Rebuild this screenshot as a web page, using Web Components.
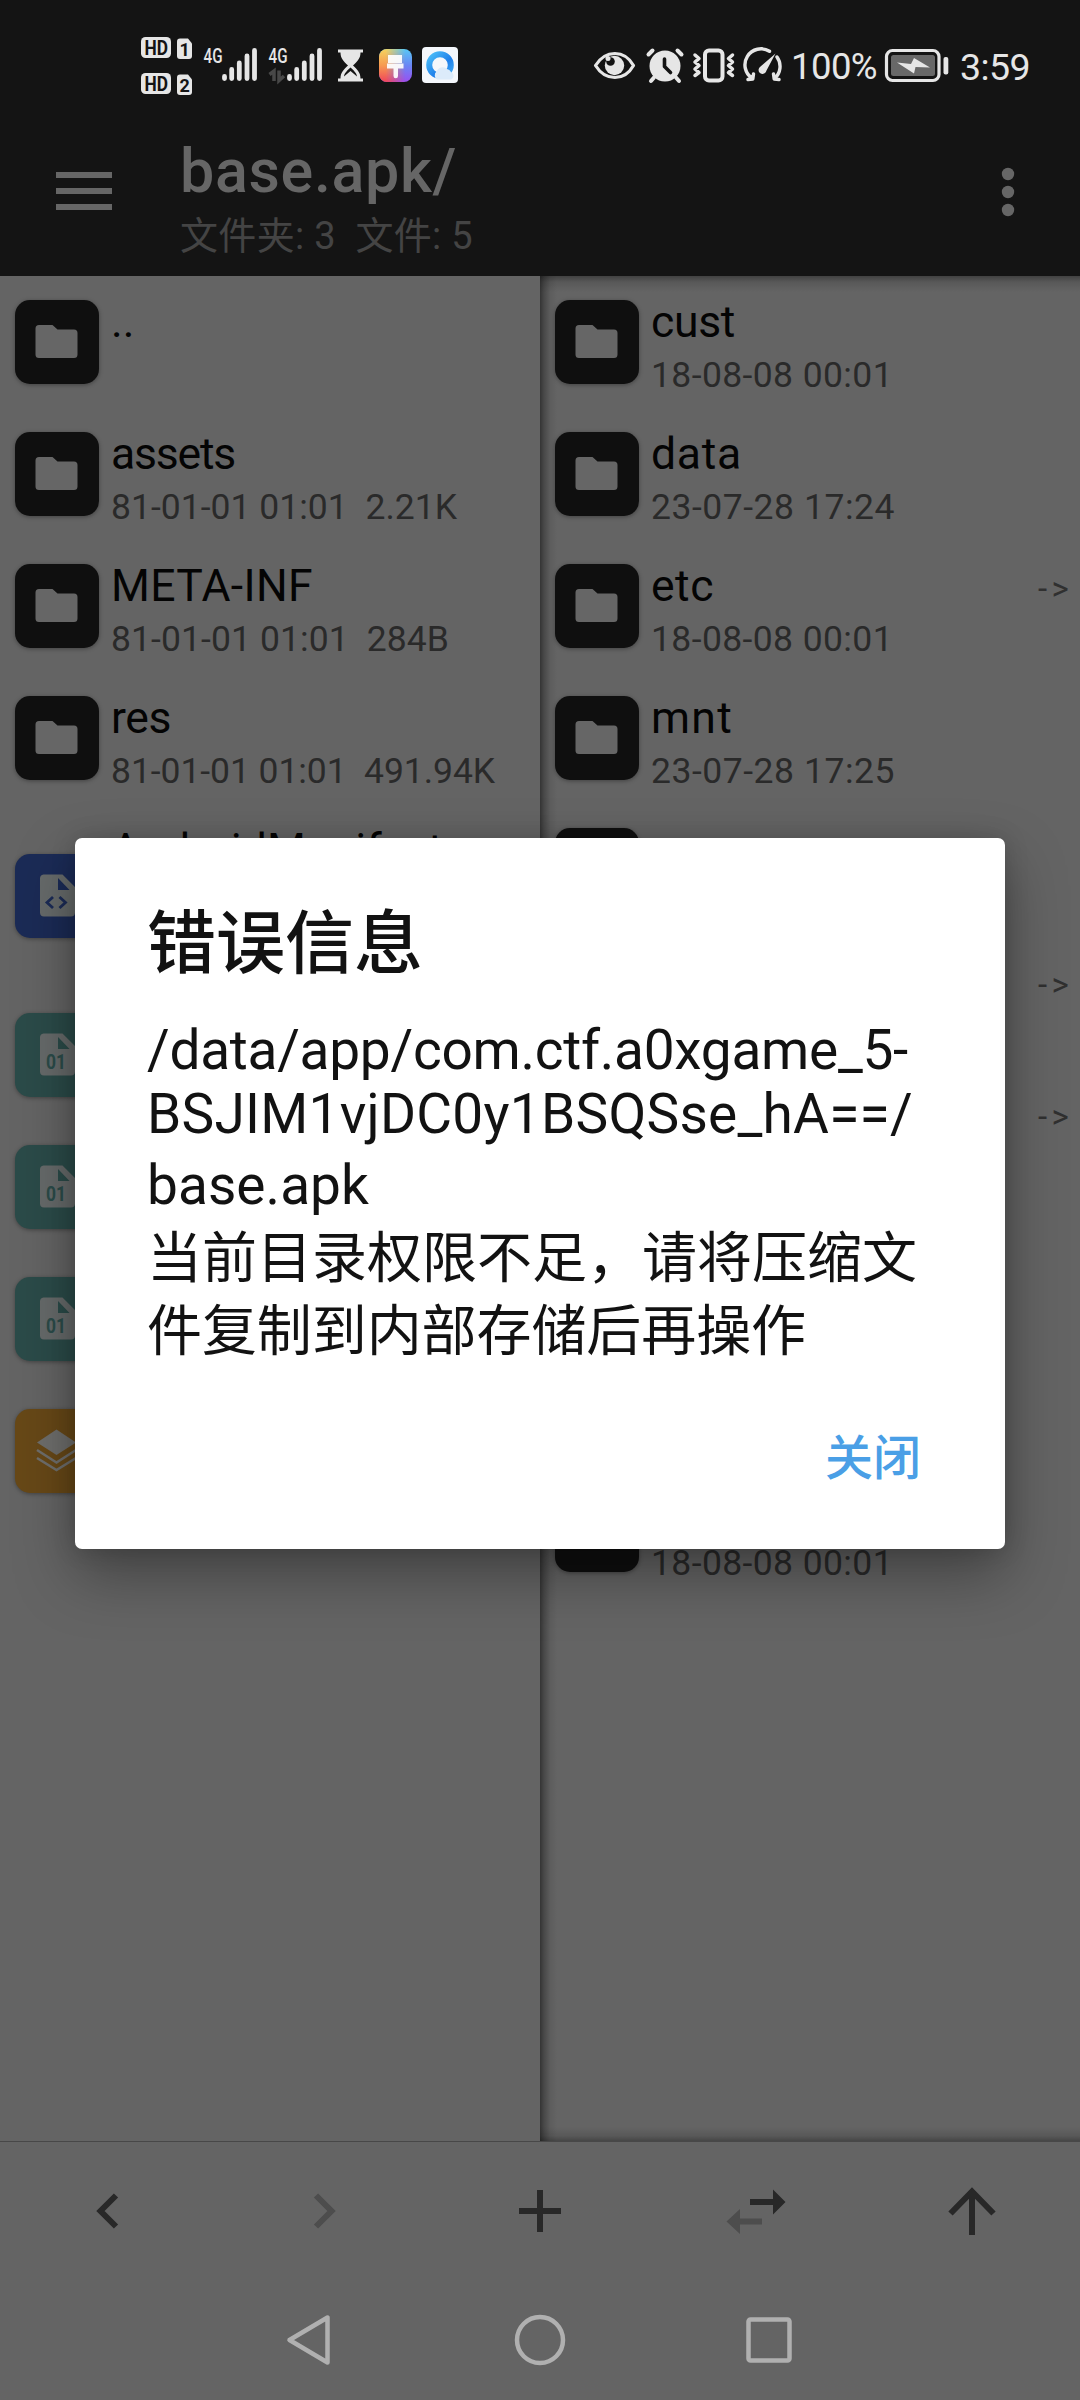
<!DOCTYPE html>
<html lang="zh-CN">
<head>
<meta charset="utf-8">
<title>base.apk/</title>
<style>
html,body{margin:0;padding:0}
body{width:1080px;height:2400px;overflow:hidden;background:#646464;font-family:Roboto,"Noto Sans CJK SC",sans-serif}
</style>
</head>
<body>
<file-app></file-app>
<script>
const define = (name, html, init) => {
  const tpl = document.createElement('template');
  tpl.innerHTML = html;
  customElements.define(name, class extends HTMLElement {
    connectedCallback() {
      if (this.shadowRoot) return;
      const root = this.attachShadow({mode: 'open'});
      root.append(tpl.content.cloneNode(true));
      if (init) init.call(this, root);
    }
  });
};

/* One line of text whose tracking is set so that it fills a given width. */
define('fit-text', `<style>:host{display:block;white-space:pre}span{display:inline-block}</style><span><slot></slot></span>`,
  function (root) {
    const span = root.querySelector('span');
    const want = +this.getAttribute('w');
    const n = [...this.textContent].length;
    if (!want || n < 2) return;
    span.style.letterSpacing = ((want - span.getBoundingClientRect().width) / n) + 'px';
  });

define('status-bar', `<style>
:host{display:flex;height:120px;color:#e6e6e6;padding-left:138px;box-sizing:border-box}
svg{display:block;height:120px;flex:none}
.gap{flex:1}
fit-text{line-height:120px;flex:none}
.pct{font-size:36.5px;width:95px;padding-top:10px;height:120px;line-height:114px;padding-left:8px;box-sizing:border-box}
.time{font-size:37.5px;width:130px;padding:10px 0 0 10px;height:120px;line-height:114px;box-sizing:border-box}
text{font-family:Roboto,sans-serif}
</style>
<svg width="62" viewBox="138 0 62 120"><g fill="#e6e6e6"><rect x="141" y="37" width="30" height="21" rx="4.5"/><path d="M180 38.5h8l4 5v12.500a3 3 0 0 1-3 3h-9a3 3 0 0 1-3-3v-14.500a3 3 0 0 1 3-3z"/><rect x="141" y="73" width="30" height="21" rx="4.500"/><path d="M180 74.500h8l4 5v12.500a3 3 0 0 1-3 3h-9a3 3 0 0 1-3-3v-14.500a3 3 0 0 1 3-3z"/></g>
<g fill="#141414" font-weight="700" font-size="20"><text x="144.500" y="55" textLength="23.500" lengthAdjust="spacingAndGlyphs">HD</text><text x="179.500" y="56" font-size="18">1</text><text x="144.500" y="91" textLength="23.500" lengthAdjust="spacingAndGlyphs">HD</text><text x="179.500" y="92" font-size="18">2</text></g></svg>
<svg width="65" viewBox="200 0 65 120"><text x="203.500" y="63" font-size="20.500" font-weight="500" fill="#e6e6e6" textLength="19" lengthAdjust="spacingAndGlyphs">4G</text><path d="M224.500 76.500v2M231.700 69.500v9M239.300 63v15.500M247 56v22.500M254.500 50.500v28" stroke="#e6e6e6" stroke-width="4.800" stroke-linecap="round"/></svg>
<svg width="69" viewBox="265 0 69 120"><text x="268.500" y="63" font-size="20.500" font-weight="500" fill="#e6e6e6" textLength="19" lengthAdjust="spacingAndGlyphs">4G</text><path d="M289.500 76.500v2M296.700 69.500v9M304.300 63v15.500M312 56v22.500M319.500 50.500v28" stroke="#e6e6e6" stroke-width="4.800" stroke-linecap="round"/><path d="M269.500 74.500l4.500-3.500v10M279 70.500v10l5-4.500" fill="none" stroke="#484848" stroke-width="3.500"/></svg>
<svg width="40" viewBox="334 0 40 120"><path fill="#e6e6e6" d="M338 49.500h25v3h-2.500c0 6-3 8.500-7.500 13 4.500 4.500 7.500 7 7.500 13h2.500v3h-25v-3h2.500c0-6 3-8.500 7.500-13-4.500-4.500-7.500-7-7.500-13h-2.500z"/><path fill="#141414" d="M350.500 67.500c3 3 6 5 6.500 9l-6.500-5.500-6.500 5.500c.5-4 3.500-6 6.500-9z"/></svg>
<svg width="44" viewBox="374 0 44 120"><defs><linearGradient id="a" x1="0" y1="0" x2="0" y2="1"><stop offset="0" stop-color="#58c8f5"/><stop offset=".5" stop-color="#6a86f5"/><stop offset="1" stop-color="#9a50f0"/></linearGradient><linearGradient id="b" x1="0" y1="0" x2="0" y2="1"><stop offset="0" stop-color="#f4d35e"/><stop offset=".5" stop-color="#f79a50"/><stop offset="1" stop-color="#f0455a"/></linearGradient><linearGradient id="m"><stop offset=".2" stop-color="#fff"/><stop offset=".8" stop-color="#fff" stop-opacity="0"/></linearGradient><mask id="k"><rect x="379" y="49" width="33" height="33" fill="url(#m)"/></mask></defs><rect x="379" y="49" width="33" height="33" rx="8" fill="url(#a)"/><rect x="379" y="49" width="33" height="33" rx="8" fill="url(#b)" mask="url(#k)"/><path fill="#fff" fill-opacity=".92" d="M388 55h14v8h-14zM387 63.500h16.500v5h-5.500v7.500a2 2 0 0 1-4.500 0v-7.500h-6.500z"/></svg>
<svg width="44" viewBox="418 0 44 120"><defs><linearGradient id="q" x1="0" y1="0" x2="1" y2="1"><stop offset="0" stop-color="#4bbdf8"/><stop offset=".6" stop-color="#1f80ea"/><stop offset="1" stop-color="#3fa8f4"/></linearGradient></defs><rect x="422" y="47" width="36" height="36" rx="4" fill="#f4f7fb"/><circle cx="440" cy="65" r="10.800" fill="none" stroke="url(#q)" stroke-width="6"/><path fill="#dcebfa" d="M437 79.500a5 5 0 0 1-.5-8 6.500 6.500 0 0 1 10.500-2.500 6 6 0 0 1 4 3 4 4 0 0 1 0 7.500z"/></svg>
<div class="gap"></div>
<svg width="52" viewBox="589 0 52 120"><path d="M595.500 65.500c10-16 29-16 38 0-9 16-28 16-38 0z" fill="none" stroke="#e6e6e6" stroke-width="3.200" stroke-linejoin="round"/><circle cx="614.500" cy="65.500" r="9.700" fill="#e6e6e6"/><circle cx="610.500" cy="61.500" r="4.300" fill="#141414"/><circle cx="608" cy="58.500" r="2.500" fill="#e6e6e6"/></svg>
<svg width="48" viewBox="641 0 48 120"><circle cx="665" cy="66" r="15.500" fill="#e6e6e6"/><path d="M648.500 54.500l4-4M681.500 54.500l-4-4M654 77.500l-3 3.500M676 77.500l3 3.500" stroke="#e6e6e6" stroke-width="4" stroke-linecap="round"/><path d="M664.500 59v7.500l6 6" fill="none" stroke="#141414" stroke-width="3.600" stroke-linecap="round" stroke-linejoin="round"/></svg>
<svg width="52" viewBox="689 0 52 120"><rect x="705" y="50.500" width="17.500" height="30" rx="4" fill="none" stroke="#e6e6e6" stroke-width="4"/><path d="M695 55l4 3.500-4 3.500 4 3.500-4 3.500 4 3.500-4 3M732.500 55l-4 3.500 4 3.500-4 3.500 4 3.500-4 3.500 4 3" fill="none" stroke="#e6e6e6" stroke-width="3.500" stroke-linecap="round" stroke-linejoin="round"/></svg>
<svg width="42" viewBox="741 0 42 120"><path d="M752.500 78.500a16 16 0 0 1 17-27.200M777 57a16 16 0 0 1-2.500 21.500M748 79.500l4.800-.5.700-5M779 79.500l-4.800-.5-.7-5" fill="none" stroke="#e6e6e6" stroke-width="3.400" stroke-linecap="round" stroke-linejoin="round"/><path fill="#e6e6e6" d="M775.500 53.500L766.500 70.500a4 4 0 1 1-6-4z"/></svg>
<fit-text class="pct" w="86">100%</fit-text>
<svg width="72" viewBox="878 0 72 120"><rect x="886.500" y="50.500" width="52.500" height="30" rx="6" fill="none" stroke="#e6e6e6" stroke-width="3.200"/><rect x="891" y="55" width="44" height="21" rx="2.500" fill="#686868"/><rect x="943.500" y="57" width="4.800" height="17.500" rx="2" fill="#e6e6e6"/><path fill="#e6e6e6" d="M897 62.500l14 1.500 3-6 16 9.500-14.500-.500-1.500 6.500z"/></svg>
<fit-text class="time" w="70">3:59</fit-text>
`);

define('app-bar', `<style>
:host{display:flex;height:156px;box-sizing:border-box}
svg{display:block;flex:none}
.t{flex:1;padding-left:12px}
.a{font-size:61px;font-weight:500;line-height:70px;color:#666;height:70px;padding-top:16px}
.b{font-size:38px;line-height:50px;color:#444;margin-top:5px}
</style>
<svg width="168" height="156" viewBox="0 0 168 156"><path fill="#666" d="M56 52h56v6H56zM56 68h56v6H56zM56 84h56v6H56z"/></svg>
<div class="t"><fit-text class="a" w="277">base.apk/</fit-text><fit-text class="b" w="293">文件夹: 3  文件: 5</fit-text></div>
<svg width="144" height="156" viewBox="0 0 144 156"><g fill="#666"><circle cx="72" cy="54" r="6.200"/><circle cx="72" cy="72" r="6.200"/><circle cx="72" cy="90" r="6.200"/></g></svg>`);

const DOC = `<path d="M28.500 20.500h19L60 33v25.500a4 4 0 0 1-4 4H29a4 4 0 0 1-4-4V24.500a4 4 0 0 1 3.500-4z" fill="#666a6a"/><path d="M43 24v12h11.500z" fill="var(--box)"/>`;
const ICONS = {
  folder: ['#0f0f0f', `<path fill="#666" d="M24 25h13.500l5 4.500H59a3.500 3.500 0 0 1 3.500 3.500v21.500A3.500 3.500 0 0 1 59 58H24a3.500 3.500 0 0 1-3.500-3.500v-26A3.500 3.500 0 0 1 24 25z"/>`],
  xml: ['#1b2b56', DOC + `<path d="M38 43l-6 5.500 6 5.500M44.500 43l6 5.500-6 5.500" fill="none" stroke="#1b2b56" stroke-width="2.800"/>`],
  bin: ['#2b4b49', DOC + `<text x="31" y="55.500" font-family="Roboto,sans-serif" font-weight="700" font-size="20" textLength="20" lengthAdjust="spacingAndGlyphs" fill="#2b4b49">01</text>`],
  stack: ['#674817', `<path fill="#6e6e6c" d="M41.500 20.500L61 33.500 41.500 46 22 33.500z"/><path d="M22 41l19.500 12.500L61 41M22 49l19.500 12L61 49" fill="none" stroke="#6e6e6c" stroke-width="2.600"/>`]
};
define('file-row', `<style>
:host{display:flex;align-items:center;height:132px;box-sizing:border-box;padding-left:15px;flex:none}
:host([tall]){height:184px;margin-bottom:1px}
svg{display:block;width:84px;height:84px;border-radius:15px;flex:none;background:var(--box);box-shadow:0 1px 4px rgba(0,0,0,.35)}
.c{flex:1;padding-left:12px;align-self:stretch;padding-top:20px}
.n{font-size:44.500px;line-height:53px;color:#040404;height:53px}
.d{font-size:35.500px;line-height:44px;color:#2a2a2a;margin-top:4px}
.l{font-size:33px;line-height:40px;color:#303030;align-self:flex-start;margin:29px 7px 0 0}
</style><svg viewBox="0 0 84 84"></svg><div class="c"></div>`,
function (root) {
  const [box, art] = ICONS[this.getAttribute('icon') || 'folder'];
  this.style.setProperty('--box', box);
  root.querySelector('svg').innerHTML = art;
  const c = root.querySelector('.c');
  const line = (cls, attr, parent) => {
    const v = this.getAttribute(attr);
    if (v === null) { if (cls === 'n') c.append(Object.assign(document.createElement('div'), {className: 'n'})); return; }
    const [w, text] = v.split('|');
    const f = document.createElement('fit-text');
    f.className = cls; f.setAttribute('w', w); f.textContent = text;
    parent.append(f);
  };
  line('n', 'name', c);
  line('d', 'info', c);
  if (this.hasAttribute('link')) line('l', 'link', root);
});

define('file-pane', `<style>
:host{display:flex;flex-direction:column;flex:1;min-width:0;overflow:hidden;background:#646464;border-bottom:1px solid #484848;box-sizing:border-box}
:host([raised]){background:linear-gradient(90deg,rgba(0,0,0,.48),rgba(0,0,0,.28) 4px,rgba(0,0,0,.08) 10px,transparent 17px),linear-gradient(rgba(0,0,0,.35),rgba(0,0,0,.12) 6px,transparent 16px),linear-gradient(0deg,rgba(0,0,0,.3),rgba(0,0,0,.12) 5px,transparent 14px),#646464}
</style><slot></slot>`);

define('tool-bar', `<style>:host{display:flex;height:138px;justify-content:space-around}svg{display:block;width:216px;height:138px}</style>
<svg viewBox="0 2142 216 138"><path d="M116 2195.500l-15.500 15.500 15.500 15.500" fill="none" stroke="#282828" stroke-width="6"/></svg>
<svg viewBox="216 2142 216 138"><path d="M316 2195.500l15.500 15.500-15.500 15.500" fill="none" stroke="#4d4d4d" stroke-width="6"/></svg>
<svg viewBox="432 2142 216 138"><path d="M519 2211h42M540 2190v42" stroke="#282828" stroke-width="6"/></svg>
<svg viewBox="648 2142 216 138"><path fill="#282828" d="M750 2199h23v-9.500l12.500 12.500-12.500 12.500v-9.500h-23z"/><path fill="#4d4d4d" d="M762 2218.500h-22v-9.500l-13.500 12.500 13.500 12.500v-9.500h22z"/></svg>
<svg viewBox="864 2142 216 138"><path d="M950.500 2213.500l21.500-22 21.500 22M972 2192v43" fill="none" stroke="#282828" stroke-width="6"/></svg>`);

define('nav-bar', `<style>:host{display:flex;height:120px;justify-content:center}svg{display:block;width:230px;height:120px}</style>
<svg viewBox="195 2280 230 120"><path d="M327.500 2317.500v45l-38-22.500z" fill="none" stroke="#b0b0b0" stroke-width="4.500" stroke-linejoin="round"/></svg>
<svg viewBox="425 2280 230 120"><circle cx="540" cy="2340" r="23" fill="none" stroke="#b0b0b0" stroke-width="4.500"/></svg>
<svg viewBox="655 2280 230 120"><rect x="748.500" y="2319.500" width="41" height="41" rx="2" fill="none" stroke="#b0b0b0" stroke-width="4.500"/></svg>`);

define('error-dialog', `<style>
:host{display:flex;flex-direction:column;box-sizing:border-box;width:930px;height:711px;background:#fff;border-radius:7px;padding:61px 73px 0 72px;color:#121212;box-shadow:0 26px 60px rgba(0,0,0,.34),0 0 24px rgba(0,0,0,.16)}
.h{font-size:69px;font-weight:500;line-height:91px;height:119px}
.m{font-size:55px}
.m ::slotted(*){display:block}
.b{font-size:48px;font-weight:500;color:#4a9fe6;align-self:flex-end;margin:59px 11px 0 0;line-height:60px}
</style><div class="h"><slot name="title"></slot></div><div class="m"><slot></slot></div><div class="b"><slot name="action"></slot></div>`);

define('file-app', `<style>
:host{display:flex;flex-direction:column;width:1080px;height:2400px;background:#646464}
header{background:#141414;flex:none}
main{display:flex;height:1866px;flex:none}
error-dialog{position:absolute;left:75px;top:838px}
</style>
<header><status-bar></status-bar><app-bar></app-bar></header>
<main>
<file-pane>
<file-row name="0|.."></file-row>
<file-row name="124|assets" info="346|81-01-01 01:01  2.21K"></file-row>
<file-row name="202|META-INF" info="338|81-01-01 01:01  284B"></file-row>
<file-row name="60|res" info="384|81-01-01 01:01  491.94K"></file-row>
<file-row tall icon="xml" name="332|AndroidManifest"></file-row>
<file-row icon="bin"></file-row>
<file-row icon="bin"></file-row>
<file-row icon="bin"></file-row>
<file-row icon="stack"></file-row>
</file-pane>
<file-pane raised>
<file-row name="84|cust" info="242|18-08-08 00:01"></file-row>
<file-row name="91|data" info="244|23-07-28 17:24"></file-row>
<file-row name="63|etc" info="242|18-08-08 00:01" link="35|->"></file-row>
<file-row name="82|mnt" info="244|23-07-28 17:25"></file-row>
<file-row></file-row>
<file-row link="35|->"></file-row>
<file-row link="35|->"></file-row>
<file-row></file-row>
<file-row></file-row>
<file-row info="242|18-08-08 00:01"></file-row>
</file-pane>
</main>
<tool-bar></tool-bar>
<nav-bar></nav-bar>
<error-dialog>
<span slot="title">错误信息</span>
<fit-text w="761" style="line-height:64px">/data/app/com.ctf.a0xgame_5-</fit-text>
<fit-text w="766" style="line-height:65px">BSJIM1vjDC0y1BSQSse_hA==/</fit-text>
<fit-text w="222" style="line-height:77px">base.apk</fit-text>
<fit-text w="770" style="line-height:68px">当前目录权限不足，请将压缩文</fit-text>
<fit-text w="659" style="line-height:78px">件复制到内部存储后再操作</fit-text>
<span slot="action">关闭</span>
</error-dialog>`);
</script>
</body>
</html>
